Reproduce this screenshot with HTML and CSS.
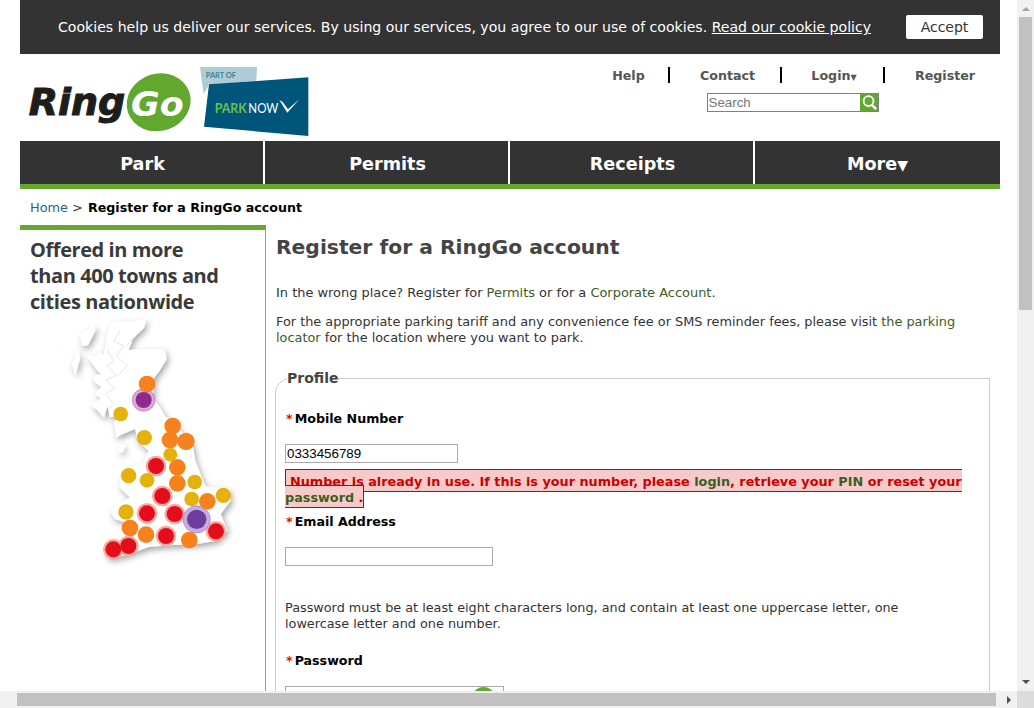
FILE: index.html
```html
<!DOCTYPE html>
<html lang="en">
<head>
<meta charset="utf-8">
<title>Register for a RingGo account</title>
<link rel="stylesheet" href="styles.css">
</head>
<body>
<div class="viewport">
  <div class="wrap">
    <div class="cookie">
      <p class="cookie-text">Cookies help us deliver our services. By using our services, you agree to our use of cookies. <a href="#">Read our cookie policy</a></p>
      <button class="accept" type="button">Accept</button>
    </div>
    <header class="head">
      <svg class="logo" viewBox="60 12 900 261" width="300" height="87" role="img" aria-label="RingGo, part of ParkNow">
        <text class="ring-word" x="86" y="196" textLength="290" lengthAdjust="spacingAndGlyphs">Ring</text>
        <ellipse cx="476" cy="157" rx="97" ry="86" transform="rotate(-18 476 157)" fill="#62a82f"/>
        <text class="go-word" x="393" y="197" textLength="158" lengthAdjust="spacingAndGlyphs">Go</text>
        <polygon points="600,51 771,51 769,92 627,104 611,133" fill="#aeccd6"/>
        <text class="part-of" x="617" y="85" textLength="91" lengthAdjust="spacingAndGlyphs">PART OF</text>
        <polygon points="627,103 925,82 925,258 612,230" fill="#00567a"/>
        <text class="park" x="644" y="190" textLength="96" lengthAdjust="spacingAndGlyphs">PARK</text>
        <text class="now" x="745" y="190" textLength="90" lengthAdjust="spacingAndGlyphs">NOW</text>
        <path d="M838 150 L862 188 L898 148 L864 178 L848 156 Z" fill="#fff"/>
      </svg>
      <div class="head-right">
        <ul class="util">
          <li class="u-help"><a href="#">Help</a></li>
          <li class="u-contact"><a href="#">Contact</a></li>
          <li class="u-login"><a href="#">Login<span class="caret">▼</span></a></li>
          <li class="u-reg"><a href="#">Register</a></li>
        </ul>
        <form class="search">
          <input class="search-input" type="text" placeholder="Search">
          <span class="search-btn">
            <svg viewBox="0 0 20 20" width="19" height="19"><circle cx="9" cy="8.5" r="5.2" fill="none" stroke="#fff" stroke-width="2"/><path d="M12.5 12.5 L17 17" stroke="#fff" stroke-width="2.4"/></svg>
          </span>
        </form>
      </div>
    </header>
    <nav class="nav">
      <a href="#">Park</a>
      <a href="#">Permits</a>
      <a href="#">Receipts</a>
      <a href="#">More<span class="nav-caret">▼</span></a>
    </nav>
    <div class="crumbs"><a href="#">Home</a> &gt; <strong>Register for a RingGo account</strong></div>
    <div class="columns">
      <aside class="side">
        <h2 class="side-title">Offered in more than 400 towns and cities nationwide</h2>
        <svg class="map" viewBox="0 0 738 840" width="246" height="280" aria-hidden="true">
          <defs>
            <filter id="sh" x="-25%" y="-25%" width="150%" height="150%"><feDropShadow dx="6" dy="9" stdDeviation="10" flood-color="#000" flood-opacity=".36"/></filter>
            <filter id="soft" x="-10%" y="-10%" width="120%" height="120%"><feGaussianBlur stdDeviation="1.6"/></filter>
          </defs>
          <g fill="#fff" filter="url(#sh)">
            <path d="M272 72 L286 62 L330 66 L378 58 L372 84 L350 104 L338 118 L326 150 L400 148 L432 148 L441 176 L420 210 L402 234 L400 270 L398 294 L420 322 L436 350 L456 360 L482 392 L516 424 L526 482 L548 540 L558 560 L600 562 L628 566 L632 602 L602 642 L622 692 L590 722 L530 732 L440 736 L382 742 L330 762 L272 776 L250 758 L292 722 L328 672 L284 656 L270 632 L330 592 L298 562 L308 510 L370 490 L386 452 L352 422 L346 386 L318 398 L288 412 L282 366 L300 346 L270 352 L262 318 L252 354 L232 330 L212 316 L242 296 L226 280 L244 262 L222 244 L218 226 L244 224 L228 206 L200 166 L224 172 L238 154 L250 166 L258 132 L262 100 Z"/>
            <path d="M222 74 L226 92 L204 136 L186 138 L180 106 Z"/>
            <path d="M174 148 L180 176 L166 226 L156 192 Z"/>
            <path d="M300 438 L316 434 L308 458 L294 456 Z"/>
            <path d="M104 130 l6 2 l-2 6 z"/>
          </g>
          <g fill="none" stroke="#cfcfcf" stroke-width="1.5">
            <path d="M262 150 L282 184 L262 196 L290 226 L258 240 L284 264 L256 282 L280 310 L262 334"/>
            <path d="M300 92 L282 124 L310 136 L290 170 L322 196 L296 226"/>
            <path d="M340 112 L318 140"/>
          </g>
          <g class="halo-red" filter="url(#soft)">
            <circle cx="408" cy="498" r="31"/><circle cx="427" cy="588" r="31"/><circle cx="381" cy="640" r="31"/><circle cx="464" cy="642" r="31"/><circle cx="588" cy="694" r="31"/><circle cx="438" cy="708" r="31"/><circle cx="325" cy="738" r="31"/><circle cx="280" cy="748" r="31"/>
          </g>
          <g class="halo-pur1" filter="url(#soft)"><circle cx="371" cy="300" r="34"/></g>
          <g class="halo-pur2" filter="url(#soft)"><circle cx="530" cy="658" r="41"/></g>
          <g class="orange" filter="url(#soft)">
            <circle cx="381" cy="252" r="25"/><circle cx="458" cy="378" r="25"/><circle cx="450" cy="420" r="25"/><circle cx="498" cy="424" r="26"/><circle cx="472" cy="502" r="25"/><circle cx="472" cy="550" r="25"/><circle cx="562" cy="604" r="25"/><circle cx="330" cy="684" r="25"/><circle cx="378" cy="704" r="25"/><circle cx="508" cy="720" r="25"/>
          </g>
          <g class="yellow" filter="url(#soft)">
            <circle cx="302" cy="342" r="22"/><circle cx="373" cy="413" r="23"/><circle cx="451" cy="464" r="21"/><circle cx="326" cy="527" r="23"/><circle cx="381" cy="541" r="22"/><circle cx="524" cy="546" r="22"/><circle cx="515" cy="597" r="22"/><circle cx="610" cy="586" r="23"/><circle cx="318" cy="636" r="23"/>
          </g>
          <g class="red" filter="url(#soft)">
            <circle cx="408" cy="498" r="24"/><circle cx="427" cy="588" r="24"/><circle cx="381" cy="640" r="24"/><circle cx="464" cy="642" r="24"/><circle cx="588" cy="694" r="24"/><circle cx="438" cy="708" r="24"/><circle cx="325" cy="738" r="24"/><circle cx="280" cy="748" r="24"/>
          </g>
          <g filter="url(#soft)">
            <circle class="pur1" cx="371" cy="300" r="24"/>
            <circle class="pur2" cx="530" cy="658" r="29"/>
          </g>
        </svg>
      </aside>
      <main class="main">
        <h1 class="title">Register for a RingGo account</h1>
        <p class="para para-first">In the wrong place? Register for <a href="#">Permits</a> or for a <a href="#">Corporate Account</a>.</p>
        <p class="para">For the appropriate parking tariff and any convenience fee or SMS reminder fees, please visit <a href="#">the parking locator</a> for the location where you want to park.</p>
        <fieldset class="profile">
          <legend>Profile</legend>
          <label class="label label-mobile"><span class="req">*</span>Mobile Number</label>
          <input class="field field-mobile" type="text" value="0333456789">
          <div class="error-line"><span class="error">Number is already in use. If this is your number, please <a href="#">login</a>, retrieve your <a href="#">PIN</a> or reset your <a href="#">password</a> .</span></div>
          <label class="label label-email"><span class="req">*</span>Email Address</label>
          <input class="field field-email" type="text">
          <p class="para pw-note">Password must be at least eight characters long, and contain at least one uppercase letter, one lowercase letter and one number.</p>
          <label class="label label-pw"><span class="req">*</span>Password</label>
          <div class="field field-pw"><span class="pw-dot"></span></div>
        </fieldset>
      </main>
    </div>
  </div>
  <div class="sb sb-v"><span class="arr arr-up"></span><span class="thumb-v"></span><span class="arr arr-down"></span></div>
  <div class="sb sb-h"><span class="thumb-h"></span><span class="arr arr-right"></span></div>
  <div class="sb-corner"></div>
</div>
</body>
</html>
```
FILE: styles.css
```css
* { box-sizing: border-box; }
html, body { margin: 0; padding: 0; height: 100%; overflow: hidden; background: #fff; }
body { font-family: "DejaVu Sans", Verdana, sans-serif; font-size: 12.87px; color: #333; }
a { color: #3b5d24; text-decoration: none; }

.viewport { position: relative; width: 1034px; height: 708px; overflow: hidden; }
.wrap { width: 980px; margin-left: 20px; }

.cookie { height: 54px; background: #333; color: #fff; display: flex; align-items: center; justify-content: space-between; padding: 0 17px 0 38px; }
.cookie-text { margin: 0; font-size: 14.1px; white-space: nowrap; }
.cookie-text a { color: #fff; text-decoration: underline; }
.accept { width: 77px; height: 24px; background: #fff; border: 0; border-radius: 2px; color: #333; font: 14px "DejaVu Sans", sans-serif; padding: 0; }

.head { height: 87px; display: flex; justify-content: space-between; }
.logo { display: block; }
.ring-word { font-family: "DejaVu Sans", sans-serif; font-size: 112px; font-weight: 700; font-style: italic; fill: #1d1d1b; stroke: #1d1d1b; stroke-width: 3; }
.go-word { font-family: "DejaVu Sans", sans-serif; font-size: 100px; font-weight: 700; font-style: italic; fill: #fff; }
.part-of { font-family: "Lato", sans-serif; font-size: 22px; font-weight: 700; fill: #3f7f9c; }
.park { font-family: "Lato", sans-serif; font-size: 40px; font-weight: 700; fill: #6cc24a; }
.now { font-family: "Lato", sans-serif; font-size: 40px; font-weight: 400; fill: #fff; }

.head-right { width: 412px; display: flex; flex-direction: column; align-items: center; padding-top: 13px; }
.util { list-style: none; margin: 0; padding: 0; display: flex; align-self: stretch; height: 16px; }
.util li { text-align: center; border-right: 2px solid #000; line-height: 18px; font-weight: 700; font-size: 12.65px; }
.u-help { flex: 0 0 82px; padding-left: 1px; }
.u-contact { flex: 0 0 112px; padding-left: 5px; }
.u-login { flex: 0 0 103px; padding-left: 3px; }
.util .u-reg { flex: 0 0 115px; border-right: 0; padding-left: 5px; }
.util a { color: #555; }
.caret { font-size: 8px; }

.search { display: flex; margin: 10px 0 0 -3px; align-self: center; }
.search-input { width: 153px; height: 19px; border: 1px solid #808080; border-right: 0; padding: 0 1px; font: 13.33px Arial, "Liberation Sans", sans-serif; }
.search-input::placeholder { color: #777; opacity: 1; }
.search-btn { width: 19px; height: 19px; background: #62a82f; display: block; border: 1px solid #808080; border-left: 0; }
.search-btn svg { display: block; margin-top: -1px; }

.nav { display: flex; background: #333; height: 48px; border-bottom: 5px solid #62a82f; }
.nav a { flex: 1 1 0; color: #fff; text-align: center; font-size: 17.6px; font-weight: 700; line-height: 47px; height: 43px; overflow: hidden; }
.nav a:not(:last-child) { box-shadow: inset -2px 0 0 #fff; }
.nav-caret { font-size: 14px; }

.crumbs { height: 36px; padding: 11px 0 0 10px; color: #333; line-height: 16px; }
.crumbs a { color: #2a6478; }
.crumbs strong { color: #000; font-size: 12.65px; margin-left: 1px; }

.columns { display: flex; align-items: stretch; height: 520px; }
.side { width: 246px; border-top: 5px solid #62a82f; border-right: 1px solid #999; padding-top: 7px; }
.side-title { margin: 0; padding: 0 40px 0 10px; font: 700 20px/26px "Open Sans", sans-serif; letter-spacing: -.42px; color: #3a3a3a; }
.map { display: block; margin-top: -15px; }
.halo-red circle { fill: #f9a99d; }
.halo-pur1 circle { fill: #d9a9d6; stroke: #a95aa7; stroke-width: 1.5; }
.halo-pur2 circle { fill: #c4aee0; stroke: #8f6cc0; stroke-width: 1.5; }
.orange circle { fill: #f5821f; }
.yellow circle { fill: #e5b20f; }
.red circle { fill: #e30f1f; }
.pur1 { fill: #8e2a8a; }
.pur2 { fill: #6d3d9e; }

.main { flex: 1; padding: 0 10px 0 9px; }
.title { margin: 10px 0 0 1px; font-size: 20.3px; line-height: 24px; color: #444; font-weight: 700; }
.para { margin: 0 0 0 1px; line-height: 16px; }
.para-first { font-size: 12.95px; }
.title + .para { margin-top: 26px; }
.para + .para { margin-top: 13px; }
.profile { margin: 24px 0 0; padding: 0 9px; border: 1px solid #ccc; border-radius: 15px 0 0 0; min-width: 0; }
.profile legend { padding: 0; margin-left: 2px; font-size: 14px; font-weight: 700; color: #444; line-height: 16px; }
.label { display: block; font-weight: 700; color: #000; line-height: 16px; font-size: 12.65px; }
.label-mobile { margin-top: 25px; }
.req { color: #f00; margin: 0 2px 0 1px; }
.field { display: block; height: 19px; border: 1px solid #aaa; background: #fff; padding: 0 1px; font: 13.33px Arial, "Liberation Sans", sans-serif; color: #000; border-radius: 0; }
.field-mobile { width: 173px; margin-top: 17px; }
.error-line { margin-top: 11px; line-height: 16px; width: 680px; font-size: 12.8px; }
.error { background: #f7caca; border: 1px solid #c00; color: #c00; font-weight: 700; padding: 4px 0 2px 4px; line-height: 16px; }
.error a { color: #3b5d24; }
.label-email { margin-top: 8px; }
.field-email { width: 208px; margin-top: 17px; }
.pw-note { margin: 34px 0 0; width: 640px; font-size: 12.8px; }
.label-pw { margin-top: 21px; }
.field-pw { width: 219px; margin-top: 17px; position: relative; height: 40px; overflow: hidden; }
.pw-dot { position: absolute; left: 186px; top: 0; width: 23px; height: 23px; background: #62a82f; border-radius: 50%; }

.sb { position: absolute; background: #f1f1f1; }
.sb-v { right: 0; top: 0; width: 17px; height: 691px; }
.sb-h { left: 0; bottom: 0; width: 1017px; height: 17px; }
.sb-corner { position: absolute; right: 0; bottom: 0; width: 17px; height: 17px; background: #dcdcdc; }
.thumb-v { position: absolute; left: 2px; top: 17px; width: 13px; height: 293px; background: #c1c1c1; }
.thumb-h { position: absolute; left: 17px; top: 2px; width: 979px; height: 13px; background: #c1c1c1; }
.arr { position: absolute; width: 0; height: 0; border-style: solid; border-color: transparent; }
.arr-up { left: 5px; top: 7px; border-width: 0 4px 4px; border-bottom-color: #a3a3a3; }
.arr-down { left: 5px; bottom: 7px; border-width: 4px 4px 0; border-top-color: #505050; }
.arr-right { right: 6px; top: 5px; border-width: 4px 0 4px 4px; border-left-color: #505050; }
```
